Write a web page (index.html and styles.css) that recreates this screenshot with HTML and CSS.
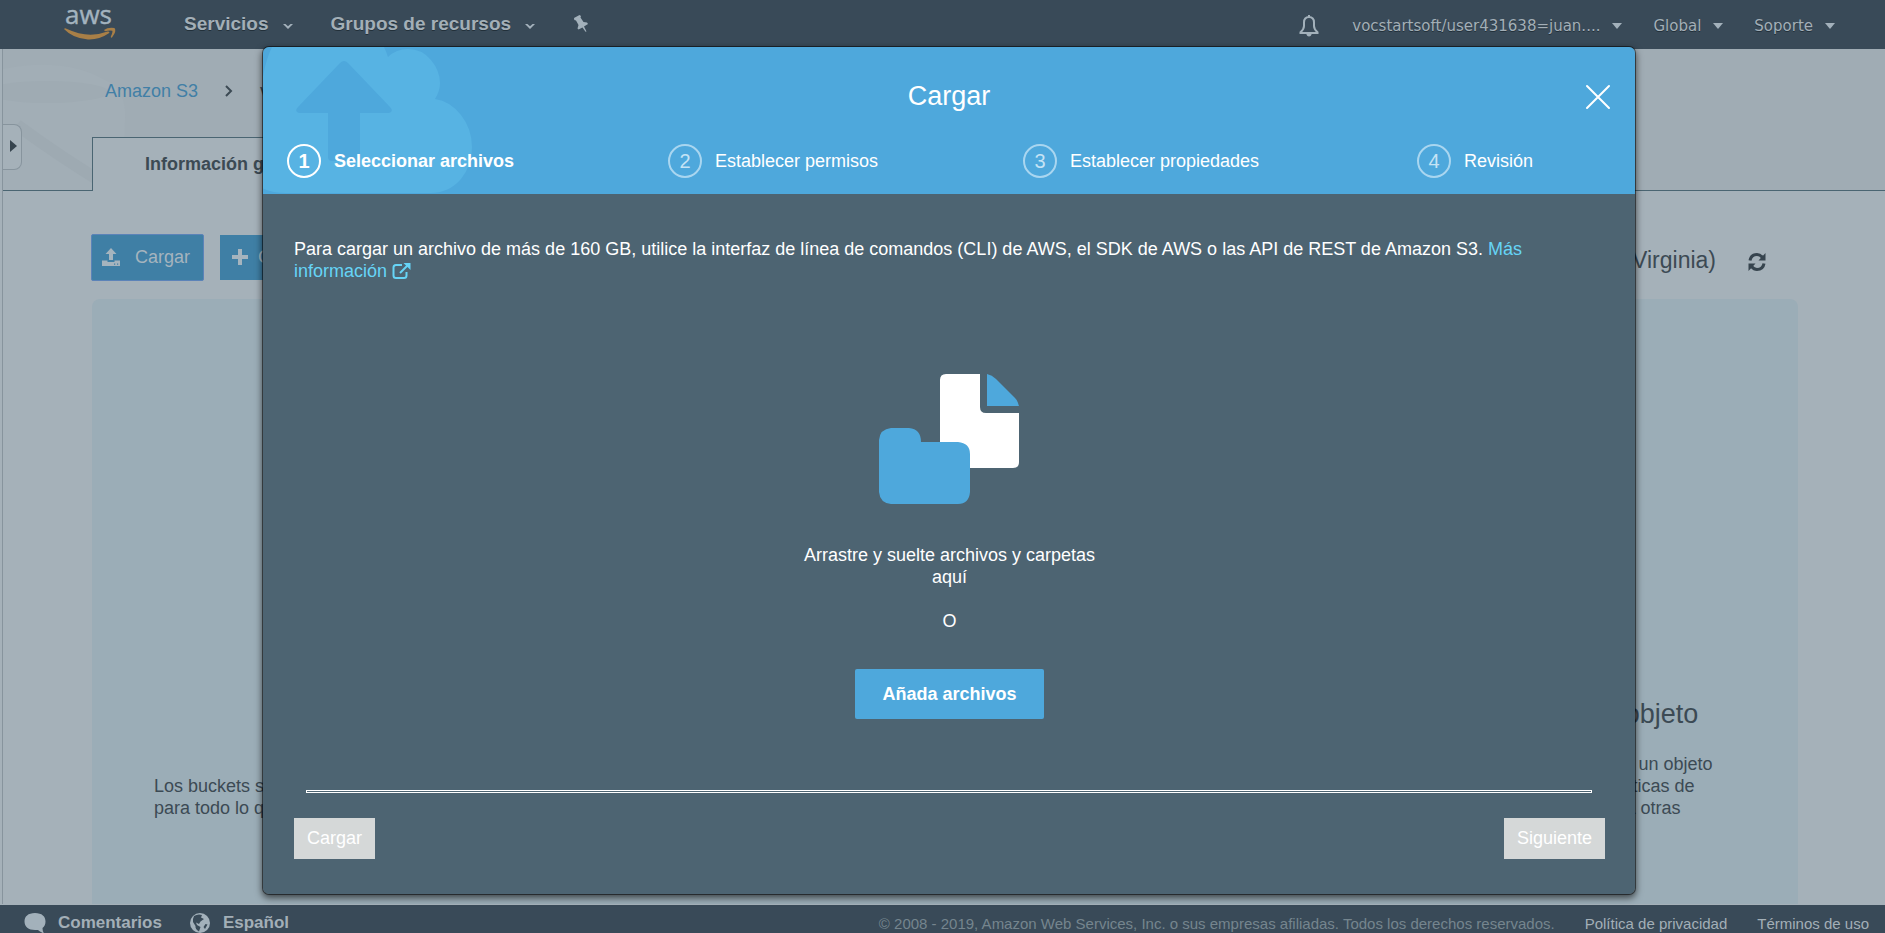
FILE: index.html
```html
<!DOCTYPE html>
<html lang="es">
<head>
<meta charset="utf-8">
<title>Amazon S3</title>
<link rel="stylesheet" href="styles.css">
</head>
<body>
<div class="page">
  <header class="topbar">
    <a class="logo" href="#" aria-label="aws">
      <svg width="52" height="40" viewBox="0 0 52 40">
        <text class="logo-text" x="1" y="24">aws</text>
        <path class="smile" d="M0 29Q1 27.800 2.500 28.800Q24 39 43.500 31.500Q46 31 45.300 33Q35 40 24 39.500Q9 38.500 0 29Z"/>
        <path class="smile" d="M40 30Q44 27 50.500 28Q53 31 48 37.500Q46.500 38 46.800 36.500Q49 32 48.300 30.800Q46 30 41 31.200Z"/>
      </svg>
    </a>
    <nav class="nav-main">
      <button class="nav-item" type="button">Servicios
        <svg width="12" height="7" viewBox="0 0 12 7"><path class="chevron" d="M1 1h2.500L6 3.300 8.500 1H11L6 6Z"/></svg>
      </button>
      <button class="nav-item" type="button">Grupos de recursos
        <svg width="12" height="7" viewBox="0 0 12 7"><path class="chevron" d="M1 1h2.500L6 3.300 8.500 1H11L6 6Z"/></svg>
      </button>
      <button class="nav-item nav-pin" type="button" aria-label="Anclar">
        <svg width="16" height="18" viewBox="0 0 16 18"><path class="chevron" d="M1 3 6.500 0 8 1 7.500 2.500 10.500 7 14 7.500 15 9 11 11.500 13.500 16.500 12.500 16.800 9.500 12.500 5.500 14.500 4.500 13.500 5.500 10 3 5.500 1.300 5Z"/></svg>
      </button>
    </nav>
    <nav class="nav-user">
      <button class="nav-bell" type="button" aria-label="Notificaciones">
        <svg width="20" height="22" viewBox="0 0 20 22"><path class="bell" d="M10 2C6.500 2 5 4.500 5 7.500V11C5 14 3.500 15.500 1.500 17.200V18H18.500V17.200C16.500 15.500 15 14 15 11V7.500C15 4.500 13.500 2 10 2ZM10 0V2"/><path class="chevron" d="M7 18.500H13Q12 21.500 10 21.500T7 18.500Z"/></svg>
      </button>
      <button class="nav-link" type="button">vocstartsoft/user431638=juan....<span class="caret"></span></button>
      <button class="nav-link" type="button">Global<span class="caret"></span></button>
      <button class="nav-link" type="button">Soporte<span class="caret"></span></button>
    </nav>
  </header>

  <main class="console">
    <button class="side-toggle" type="button" aria-label="Abrir panel"><span class="side-arrow"></span></button>
    <div class="console-head">
      <svg class="watermark" width="160" height="141" viewBox="0 0 160 141">
        <path class="wm-a" d="M0 20Q60 8 100 30Q124 40 122 70Q120 110 124 141L0 141Z"/>
        <ellipse class="wm-b" cx="44" cy="43" rx="62" ry="11"/>
        <path class="wm-c" d="M14 76Q60 110 112 141"/>
      </svg>
      <nav class="crumbs">
        <a class="crumb-link" href="#">Amazon S3</a>
        <svg width="8" height="12" viewBox="0 0 8 12"><path class="crumb-sep" d="M1 1L6 6L1 11"/></svg>
        <span>vocstartsoft-bucket</span>
      </nav>
      <div class="tabs">
        <button class="tab" type="button">Información general</button>
      </div>
    </div>
    <div class="console-body">
      <div class="toolbar">
        <button class="tool tool-active" type="button">
          <svg width="20" height="19" viewBox="0 0 20 19"><path class="tool-icon" d="M10 0L15.500 6H12V12H8V6H4.500ZM1 12.500H6.500V14H13.500V12.500H19V18H1ZM13 15.500v1.200h1.200v-1.200ZM16 15.500v1.200h1.200v-1.200Z"/></svg>
          Cargar
        </button>
        <button class="tool tool-new" type="button">
          <svg width="16" height="16" viewBox="0 0 16 16"><path class="tool-icon" d="M6 0H10V6H16V10H10V16H6V10H0V6H6Z"/></svg>
          Crear carpeta
        </button>
        <span class="region">EE.UU. Este (Norte de Virginia)</span>
        <button class="refresh" type="button" aria-label="Actualizar">
          <svg width="18" height="20" viewBox="0 0 18 20"><path class="refresh-arc" d="M2 8.500Q3 2.500 9 2.500Q12 2.500 14.500 5.500M16 11.500Q15 17.500 9 17.500Q6 17.500 3.500 14.500"/><path class="refresh-head" d="M17.500 1V8.500H10.500ZM.5 19V11.500H7.500Z"/></svg>
        </button>
      </div>
      <div class="panel">
        <section class="card">
          <h2 class="card-title">Cargar un objeto</h2>
          <p class="card-text">Los buckets son contenedores universales<br>para todo lo que almacena en Amazon S3.<br>&nbsp;</p>
          <a class="card-link" href="#">Más información</a>
        </section>
        <section class="card">
          <h2 class="card-title">Propiedades</h2>
          <p class="card-text">Configure las propiedades<br>adicionales de los objetos<br>cargados.<br>&nbsp;</p>
          <a class="card-link" href="#">Más información</a>
        </section>
        <section class="card">
          <h2 class="card-title">Establecer permisos del objeto</h2>
          <p class="card-text">De manera predeterminada, todo acceso a un objeto<br>es privado, pero permite configurar las políticas de<br>acceso para conceder permisos de datos a otras<br>personas.</p>
          <a class="card-link" href="#">Más información</a>
        </section>
      </div>
    </div>
  </main>

  <footer class="footer">
    <button class="foot-btn" type="button">
      <svg width="22" height="22" viewBox="0 0 22 22"><path class="foot-icon" d="M11 1C4 1 .5 4.500 .5 9.500S4.500 18 11 18H14Q16 20 20 21.500Q18.500 19 18.500 16Q21.500 13.500 21.500 9.500C21.500 4.500 18 1 11 1Z"/></svg>
      Comentarios
    </button>
    <button class="foot-btn" type="button">
      <svg width="22" height="22" viewBox="0 0 22 22"><circle class="foot-icon" cx="11" cy="11" r="10"/><path class="foot-land" d="M5 4Q9 1.500 13 3L12 5.500 15 7 11.500 9.500 10 12 7 10.500 8 13 11.500 15 10 19.500Q6 17 6.500 14L4 10Q3.500 7 5 4ZM16.500 12L18.500 12.500 16 17 14.500 15Z"/></svg>
      Español
    </button>
    <span class="copyright">© 2008 - 2019, Amazon Web Services, Inc. o sus empresas afiliadas. Todos los derechos reservados.</span>
    <a class="foot-link" href="#">Política de privacidad</a>
    <a class="foot-link" href="#">Términos de uso</a>
  </footer>

  <div class="overlay">
    <section class="modal" role="dialog" aria-label="Cargar">
      <header class="modal-head">
        <svg class="cloud" width="210" height="147" viewBox="1 0 210 147">
          <path class="cloud-shape" d="M10 0H122Q124 4 126 10Q134 2 146 2Q160 2 169 13Q178 24 178 36Q178 44 173 52Q188 54 199 68Q210 82 210 100Q210 118 199 132Q187 146 168 146H24Q10 146 0 141V36Q3 14 10 0Z"/>
          <path class="cloud-arrow" d="M78 16Q82 12 86 16L128 60Q131 63 129 65Q128 66 126 66H98V110Q98 114 94 114H70Q66 114 66 110V66H38Q36 66 35 65Q33 63 36 60Z"/>
        </svg>
        <h1 class="modal-title">Cargar</h1>
        <button class="close" type="button" aria-label="Cerrar">
          <svg width="26" height="26" viewBox="0 0 26 26"><path class="close-mark" d="M2 2L24 24M24 2L2 24"/></svg>
        </button>
        <ol class="steps">
          <li class="step step-current"><span class="step-num">1</span>Seleccionar archivos</li>
          <li class="step"><span class="step-num">2</span>Establecer permisos</li>
          <li class="step"><span class="step-num">3</span>Establecer propiedades</li>
          <li class="step"><span class="step-num">4</span>Revisión</li>
        </ol>
      </header>
      <div class="modal-body">
        <p class="notice">Para cargar un archivo de más de 160 GB, utilice la interfaz de línea de comandos (CLI) de AWS, el SDK de AWS o las API de REST de Amazon S3. <a class="notice-link" href="#">Más información <svg width="19" height="16" viewBox="0 0 19 16"><path class="ext-box" d="M10 2H4Q1.500 2 1.500 4.500V12.500Q1.500 15 4 15H12Q14.500 15 14.500 12.500V9"/><path class="ext-arrow" d="M8 10L16 2"/><path class="ext-head" d="M11.500 0H18.500V7Z"/></svg></a></p>
        <div class="drop">
          <svg width="142" height="131" viewBox="0 0 142 131">
            <path class="doc" d="M67 0H101V33Q101 39 107 39H140V88Q140 94 134 94H67Q61 94 61 88V6Q61 0 67 0Z"/>
            <path class="folder" d="M108 0Q113 1 117 5L136 24Q139 27 140 32H108Z"/>
            <path class="folder" d="M12 54H30Q42 55 42 68H79Q91 69 91 80V118Q90 130 79 130H12Q1 129 0 118V66Q1 55 12 54Z"/>
          </svg>
          <p class="drop-text">Arrastre y suelte archivos y carpetas aquí</p>
          <p class="drop-or">O</p>
          <button class="add" type="button">Añada archivos</button>
        </div>
        <div class="rule"></div>
        <div class="actions">
          <button class="action" type="button">Cargar</button>
          <button class="action" type="button">Siguiente</button>
        </div>
      </div>
    </section>
  </div>
</div>
</body>
</html>
```

FILE: styles.css
```css
* { box-sizing: border-box; }
html, body { margin: 0; height: 100%; }
body {
  font-family: "Liberation Sans", Arial, sans-serif;
  font-size: 18px;
  line-height: 22px;
  color: #3c4a54;
}
button { font: inherit; color: inherit; background: none; border: 0; padding: 0; margin: 0; }
a { text-decoration: none; color: inherit; }
p, h1, h2, ol { margin: 0; padding: 0; font-weight: normal; }
svg { display: block; flex: none; }

.page { position: relative; height: 100vh; overflow: hidden; display: flex; flex-direction: column; background: #a5b1b9; }

/* top bar */
.topbar { flex: none; height: 49px; display: flex; align-items: center; padding: 0 50px 0 64px; background: #394a58; color: #a3afb7; }
.logo { align-self: flex-start; margin-right: 68px; }
.logo svg { overflow: visible; }
.logo-text { font: 26px "Open Sans", sans-serif; fill: #a3b3bf; stroke: #a3b3bf; stroke-width: 0.4; }
.smile { fill: #a87f47; }
.nav-main { display: flex; align-items: center; gap: 37px; padding-bottom: 2px; }
.nav-item { display: flex; align-items: center; gap: 13px; font-size: 19px; font-weight: bold; text-shadow: 0 1px 0 #22303a; }
.nav-item svg { margin-top: 5px; }
.nav-item.nav-pin svg { margin-top: 0; }
.chevron { fill: #a3b1bb; }
.nav-user { display: flex; align-items: center; gap: 31px; margin-left: auto; padding-top: 2px; font-family: "DejaVu Sans", Verdana, sans-serif; font-size: 15px; }
.nav-bell { margin-right: 2px; }
.bell { fill: none; stroke: #a3b1bb; stroke-width: 2; }
.nav-link { display: flex; align-items: center; gap: 12px; text-shadow: 0 1px 0 #22303a; }
.caret { border: 5px solid transparent; border-top: 6px solid #a3b1bb; border-bottom: 0; }

/* page behind the dialog */
.console { position: relative; flex: 1; min-height: 0; display: flex; flex-direction: column; margin: 0 0 1px 2px; border-left: 1px solid #87949d; overflow: hidden; }
.console-head { position: relative; flex: none; height: 142px; display: flex; flex-direction: column; justify-content: space-between; background: #a0acb4; box-shadow: inset 0 -1px 0 #4a6572; }
.watermark { position: absolute; left: 0; top: 0; }
.wm-a { fill: #a2aeb6; }
.wm-b { fill: #9fabb3; }
.wm-c { fill: none; stroke: #9eaab2; stroke-width: 12; }
.crumbs { position: relative; display: flex; align-items: center; gap: 27px; padding: 31px 0 0 102px; }
.crumb-link { color: #417fa6; }
.crumb-sep { fill: none; stroke: #3c4a54; stroke-width: 2; }
.tabs { position: relative; display: flex; padding-left: 89px; }
.tab { height: 54px; padding: 0 53px 2px 52px; border: 1px solid #4a6572; border-bottom: 0; background: #a5b1b9; font-weight: bold; }
.side-toggle { position: absolute; z-index: 1; left: -1px; top: 75px; width: 20px; height: 46px; display: flex; align-items: center; padding: 0 0 3px 8px; background: #a5b1b9; border: 1px solid #87949d; border-left: 0; border-radius: 0 8px 8px 0; }
.side-arrow { border: 6px solid transparent; border-left: 7px solid #36444e; border-right: 0; }
.console-body { flex: 1; min-height: 0; display: flex; flex-direction: column; padding: 43px 87px 0 89px; }
.toolbar { display: flex; align-items: center; gap: 16px; height: 47px; margin-bottom: 18px; }
.tool { display: flex; align-items: center; gap: 14px; height: 45px; padding: 0 12px 1px; background: #3f7fa5; color: #a5b4be; }
.tool-active { height: 47px; padding: 0 13px 1px 9px; margin-left: -1px; border: 1px solid #5c83b8; border-radius: 2px; }
.tool-new { gap: 10px; }
.tool-icon { fill: #a5b4be; fill-rule: evenodd; }
.region { margin: 5px 0 0 auto; font-size: 23px; line-height: 26px; }
.refresh { margin: 8px 32px 0 16px; }
.refresh-arc { fill: none; stroke: #36444e; stroke-width: 3; }
.refresh-head { fill: #36444e; }
.panel { flex: 1; min-height: 0; display: grid; grid-template-columns: repeat(3, minmax(0, 1fr)); align-items: end; padding-bottom: 7px; background: #9badb7; border-radius: 8px 8px 0 0; }
.card { display: flex; flex-direction: column; padding: 0 40px 0 62px; white-space: nowrap; }
.card-title { align-self: center; margin: 0 22px 22px 0; font-size: 27px; line-height: 34px; }
.card-text { margin-bottom: 34px; }
.card-link { align-self: center; margin-right: 22px; color: #2c4254; }

/* footer */
.footer { flex: none; height: 28px; overflow: hidden; display: flex; align-items: flex-start; padding: 0 16px 0 24px; background: #394a58; color: #a3afb7; font-size: 15px; line-height: 38px; }
.foot-btn { display: flex; align-items: center; gap: 12px; margin-right: 27px; font-size: 17px; line-height: 36px; font-weight: bold; }
.foot-icon { fill: #a3b1bb; }
.foot-land { fill: #394a58; }
.copyright { margin-left: auto; color: #75858e; }
.foot-link { margin-left: 30px; }

/* dialog */
.overlay { position: absolute; inset: 0; display: flex; padding: 46px 249px 38px 262px; }
.modal { flex: 1; display: flex; flex-direction: column; background: #4d6472; background-clip: padding-box; border: 1px solid rgba(0, 0, 0, 0.5); border-radius: 7px; overflow: hidden; box-shadow: 0 3px 7px rgba(0, 0, 0, 0.6); color: #fff; }
.modal-head { position: relative; flex: none; height: 147px; display: flex; flex-direction: column; justify-content: space-between; padding: 32px 0 16px; background: #4ea8dc; }
.cloud { position: absolute; left: 0; top: 0; }
.cloud-shape { fill: #57b3e3; }
.cloud-arrow { fill: #4ea8dc; }
.modal-title { position: relative; text-align: center; font-size: 27px; line-height: 34px; }
.close { position: absolute; top: 37px; right: 24px; }
.close-mark { fill: none; stroke: #fff; stroke-width: 2; stroke-linecap: round; }
.steps { position: relative; display: grid; grid-template-columns: 381fr 355fr 394fr 218fr; padding-left: 24px; list-style: none; }
.step { display: flex; align-items: center; gap: 13px; }
.step-current { font-weight: bold; }
.step-num { width: 34px; height: 34px; border: 2px solid #a9d6f0; border-radius: 50%; text-align: center; font-size: 20px; line-height: 31px; color: #c5e3f5; }
.step-current .step-num { border-color: #fff; color: #fff; }
.modal-body { flex: 1; display: flex; flex-direction: column; padding: 44px 30px 35px 31px; }
.notice { max-width: 1260px; }
.notice-link { color: #66d4f6; }
.notice-link svg { display: inline-block; vertical-align: -2px; }
.ext-box, .ext-arrow { fill: none; stroke: #66d4f6; stroke-width: 2; }
.ext-head { fill: #66d4f6; }
.drop { flex: 1; display: flex; flex-direction: column; align-items: center; padding-top: 92px; text-align: center; }
.doc { fill: #fff; }
.folder { fill: #4ea8dc; }
.drop-text { max-width: 300px; margin-top: 39px; }
.drop-or { margin-top: 22px; }
.add { margin-top: 37px; height: 50px; padding: 0 27px; background: #4ea8dc; border-radius: 2px; font-weight: bold; }
.rule { flex: none; height: 3px; margin: 0 13px 25px 12px; border: 1px solid #fff; }
.actions { display: flex; justify-content: space-between; }
.action { height: 41px; padding: 0 13px 1px; background: #d5d8d8; }
```
